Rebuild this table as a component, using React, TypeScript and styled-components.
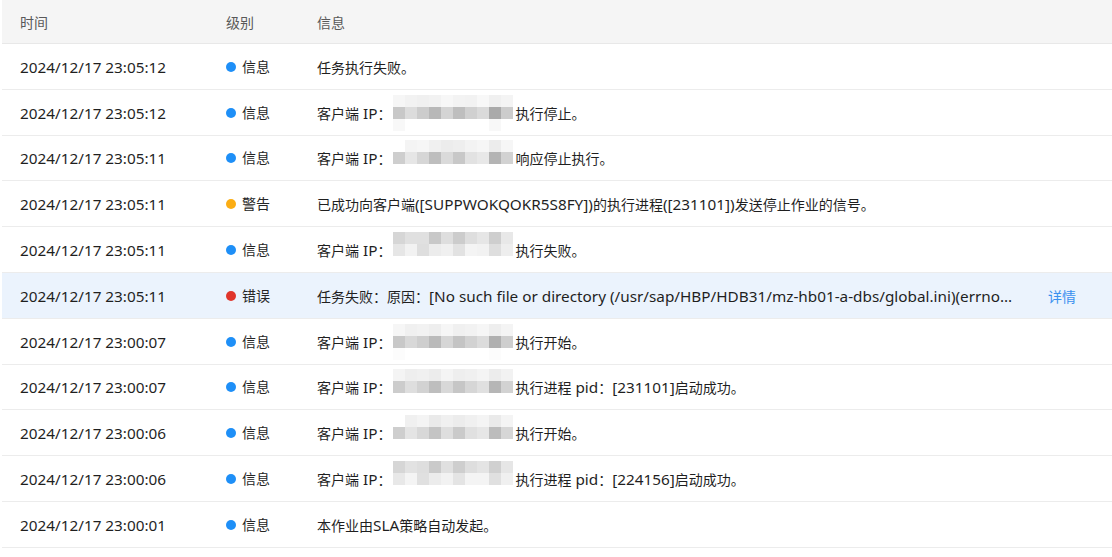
import React from "react";
import styled, { createGlobalStyle } from "styled-components";

const GlobalStyle = createGlobalStyle`
  html, body { margin: 0; padding: 0; background: #fff; }
  body { font-family: "Noto Sans", "Noto Sans CJK SC", sans-serif; font-size: 14px; color: #1f1f1f; }
`;

const Table = styled.div`
  margin-left: 2px;
  width: 1110px;
  display: grid;
  grid-template-columns: 206px 91px 731px 1fr;
`;

const HeadCell = styled.div`
  height: 44px;
  box-sizing: border-box;
  background: #f5f5f5;
  border-bottom: 1px solid #e8e8e8;
  padding-left: 18px;
  display: flex;
  align-items: center;
  color: #595959;
  font-family: "Noto Sans CJK SC", sans-serif;
  font-size: 14px;
`;

const Row = styled.div<{ $active?: boolean }>`
  display: contents;
  & > div {
    background: ${(p) => (p.$active ? "#ebf3fd" : "#fff")};
  }
`;

const Cell = styled.div`
  height: 45.8px;
  box-sizing: border-box;
  border-bottom: 1px solid #ececec;
  padding-left: 18px;
  padding-right: 16px;
  padding-top: 1px;
  display: flex;
  align-items: center;
  white-space: nowrap;
  overflow: hidden;
`;

const Latin = styled.span`
  font-family: "Noto Sans", sans-serif;
  font-size: 15.3px;
`;

const TimeText = styled.span`
  font-family: "Noto Sans", sans-serif;
  font-size: 15.3px;
  color: #1f1f1f;
`;

const Dot = styled.span<{ $color: string }>`
  width: 10px;
  height: 10px;
  border-radius: 50%;
  background: ${(p) => p.$color};
  margin-right: 6px;
  flex: none;
`;

const LevelText = styled.span`
  font-family: "Noto Sans CJK SC", sans-serif;
  color: #262626;
  margin-top: -2px;
`;

const Info = styled.span`
  font-family: "Noto Sans CJK SC", sans-serif;
  color: #1f1f1f;
  white-space: nowrap;
  display: inline-flex;
  align-items: center;
`;

const InfoEllipsis = styled.span`
  font-family: "Noto Sans", "Noto Sans CJK SC", sans-serif;
  font-size: 15.3px;
  color: #1f1f1f;
  overflow: hidden;
  text-overflow: ellipsis;
  white-space: nowrap;
  display: block;
  width: 100%;
`;

const Cjk = styled.span`
  font-family: "Noto Sans CJK SC", sans-serif;
  font-size: 14px;
`;

const Link = styled.a`
  font-family: "Noto Sans CJK SC", sans-serif;
  color: #3a91ef;
  text-decoration: none;
  cursor: pointer;
`;

const Mosaic = styled.span`
  display: inline-grid;
  grid-template-columns: repeat(10, 12px);
  grid-auto-rows: 12px;
  margin: 0 2px;
`;

const Tile = styled.span<{ $g: number }>`
  background: ${(p) => `rgb(${p.$g},${p.$g},${p.$g})`};
`;

type Level = "info" | "warn" | "error";
const levelMap: Record<Level, { color: string; label: string }> = {
  info: { color: "#1e8ff7", label: "信息" },
  warn: { color: "#fbad14", label: "警告" },
  error: { color: "#e0352b", label: "错误" },
};

const patterns: number[][][] = [
  [
    [246, 242, 240, 242, 247, 243, 242, 248, 240, 244],
    [200, 220, 204, 184, 212, 190, 208, 218, 170, 204],
    [248, 255, 255, 255, 255, 255, 255, 255, 248, 255],
  ],
  [
    [255, 244, 246, 240, 236, 238, 243, 246, 236, 246],
    [206, 230, 214, 190, 218, 200, 226, 232, 180, 210],
    [255, 255, 255, 255, 255, 255, 255, 255, 255, 255],
  ],
  [
    [214, 224, 224, 200, 222, 204, 222, 230, 206, 232],
    [230, 242, 222, 236, 240, 226, 244, 242, 222, 238],
    [255, 255, 255, 255, 255, 255, 255, 255, 255, 255],
  ],
  [
    [246, 240, 242, 238, 246, 240, 242, 246, 238, 244],
    [200, 216, 206, 186, 214, 196, 210, 220, 176, 206],
    [252, 255, 255, 255, 255, 255, 255, 255, 252, 255],
  ],
  [
    [244, 238, 240, 236, 244, 238, 240, 244, 236, 242],
    [204, 222, 210, 190, 216, 198, 214, 224, 182, 210],
    [255, 255, 255, 255, 255, 255, 255, 255, 255, 255],
  ],
  [
    [255, 240, 244, 234, 240, 236, 240, 244, 234, 244],
    [206, 228, 216, 196, 222, 202, 224, 230, 188, 214],
    [255, 255, 255, 255, 255, 255, 255, 255, 255, 255],
  ],
  [
    [214, 226, 222, 202, 224, 206, 222, 228, 208, 230],
    [232, 244, 224, 236, 242, 228, 244, 244, 224, 240],
    [255, 255, 255, 255, 255, 255, 255, 255, 255, 255],
  ],
];

const Pix: React.FC<{ p: number }> = ({ p }) => (
  <Mosaic>
    {patterns[p].flat().map((g, i) => (
      <Tile key={i} $g={g} />
    ))}
  </Mosaic>
);

const isLatin = (s: string) => /^[\u0020-\u007e]+$/.test(s);

// Split mixed text so Latin runs use a slightly larger Latin face (as in the reference UI font)
const Mixed: React.FC<{ text: string; wrapCjk?: boolean }> = ({ text, wrapCjk }) => (
  <>
    {text.split(/([\u0020-\u007e]+)/).map((part, i) =>
      part === "" ? null : isLatin(part) ? (
        <Latin key={i}>{part.replace(/ /g, "\u00a0")}</Latin>
      ) : wrapCjk ? (
        <Cjk key={i}>{part}</Cjk>
      ) : (
        <React.Fragment key={i}>{part}</React.Fragment>
      )
    )}
  </>
);

type RowData = { time: string; level: Level; info: React.ReactNode; active?: boolean; link?: boolean };

const ipRow = (p: number, rest: string) => (
  <Info>
    <Mixed text="客户端 IP：" />
    <Pix p={p} />
    <Mixed text={rest} />
  </Info>
);

const rows: RowData[] = [
  { time: "2024/12/17 23:05:12", level: "info", info: <Info>任务执行失败。</Info> },
  { time: "2024/12/17 23:05:12", level: "info", info: ipRow(0, "执行停止。") },
  { time: "2024/12/17 23:05:11", level: "info", info: ipRow(1, "响应停止执行。") },
  {
    time: "2024/12/17 23:05:11",
    level: "warn",
    info: (
      <Info>
        <Mixed text="已成功向客户端([SUPPWOKQOKR5S8FY])的执行进程([231101])发送停止作业的信号。" />
      </Info>
    ),
  },
  { time: "2024/12/17 23:05:11", level: "info", info: ipRow(2, "执行失败。") },
  {
    time: "2024/12/17 23:05:11",
    level: "error",
    active: true,
    link: true,
    info: (
      <InfoEllipsis>
        <Mixed
          wrapCjk
          text="任务失败：原因：[No such file or directory (/usr/sap/HBP/HDB31/mz-hb01-a-dbs/global.ini)(errno 2)]"
        />
      </InfoEllipsis>
    ),
  },
  { time: "2024/12/17 23:00:07", level: "info", info: ipRow(3, "执行开始。") },
  { time: "2024/12/17 23:00:07", level: "info", info: ipRow(4, "执行进程 pid：[231101]启动成功。") },
  { time: "2024/12/17 23:00:06", level: "info", info: ipRow(5, "执行开始。") },
  { time: "2024/12/17 23:00:06", level: "info", info: ipRow(6, "执行进程 pid：[224156]启动成功。") },
  {
    time: "2024/12/17 23:00:01",
    level: "info",
    info: (
      <Info>
        <Mixed text="本作业由SLA策略自动发起。" />
      </Info>
    ),
  },
];

export default function App() {
  return (
    <>
      <GlobalStyle />
      <Table>
        <HeadCell>时间</HeadCell>
        <HeadCell>级别</HeadCell>
        <HeadCell>信息</HeadCell>
        <HeadCell />
        {rows.map((r, i) => (
          <Row key={i} $active={r.active}>
            <Cell>
              <TimeText>{r.time}</TimeText>
            </Cell>
            <Cell>
              <Dot $color={levelMap[r.level].color} />
              <LevelText>{levelMap[r.level].label}</LevelText>
            </Cell>
            <Cell>{r.info}</Cell>
            <Cell>{r.link ? <Link>详情</Link> : null}</Cell>
          </Row>
        ))}
      </Table>
    </>
  );
}
